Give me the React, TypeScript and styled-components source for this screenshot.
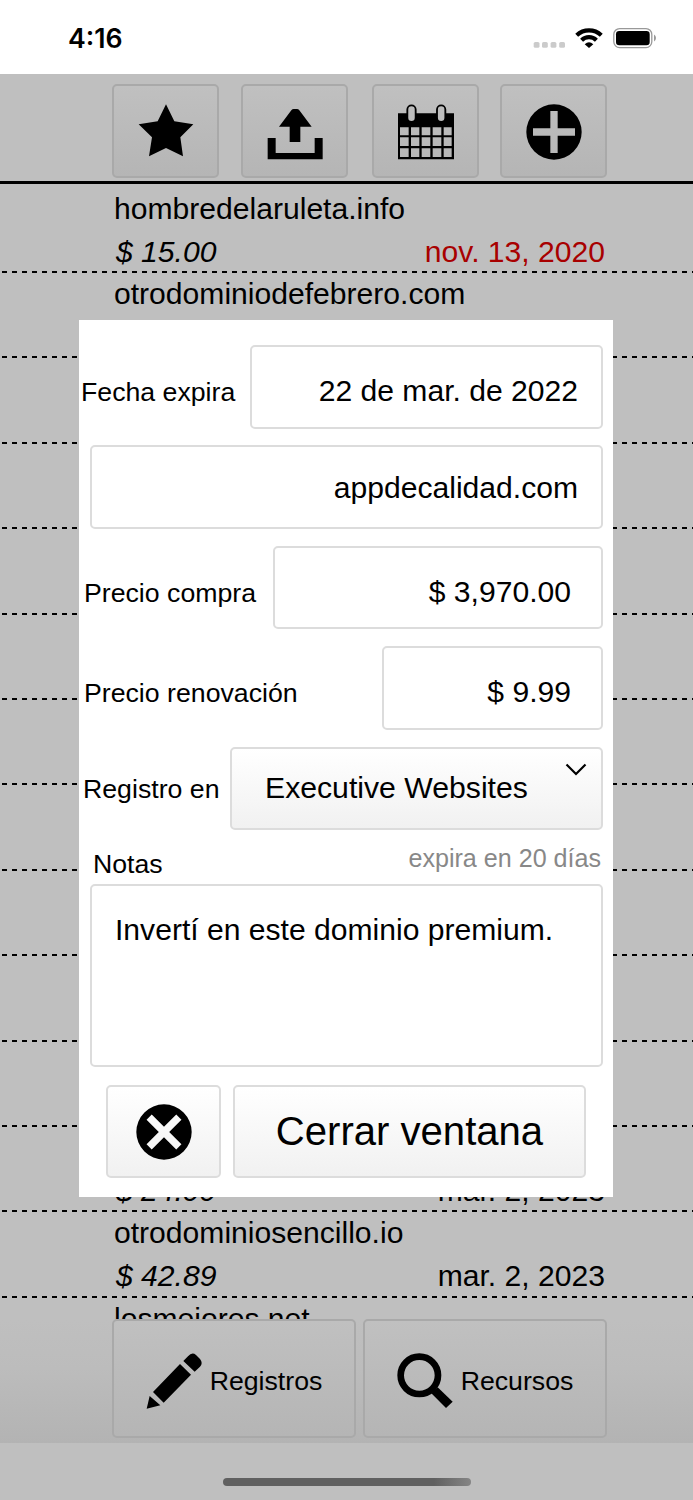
import React from "react";
import styled, { createGlobalStyle } from "styled-components";

const GlobalStyle = createGlobalStyle`
  * { box-sizing: border-box; }
  body { margin: 0; background: #bfbfbf; font-family: "Liberation Sans", Arial, sans-serif; color: #000; }
  button { font: inherit; color: inherit; cursor: pointer; }
`;

const Screen = styled.div`
  position: relative;
  display: flex;
  flex-direction: column;
  width: 693px;
  height: 1500px;
  overflow: hidden;
  background: #bfbfbf;
`;

const StatusBar = styled.header`
  display: flex;
  flex: none;
  justify-content: space-between;
  height: 74px;
  padding: 22px 36px 0 68px;
  background: #fff;
`;

const Clock = styled.time`
  font: 600 26.7px/33px Inter, sans-serif;
`;

const StatusIcons = styled.svg`
  width: 124px;
  height: 30px;
`;

const Toolbar = styled.nav`
  display: grid;
  flex: none;
  grid-template-columns: 128.5px 131px 128.5px 107px;
  height: 110px;
  padding: 10px 0 0 112px;
  border-bottom: 3px solid #000;
`;

const DimButton = styled.button<{ $w: number; $h: number; $pad?: string }>`
  display: flex;
  align-items: center;
  justify-content: center;
  width: ${(p) => p.$w}px;
  height: ${(p) => p.$h}px;
  padding: ${(p) => p.$pad ?? "2px 0 0 1px"};
  border: 2px solid #a9a9a9;
  border-radius: 5px;
  background: linear-gradient(#c0c0c0, #b5b5b5);
`;

const Icon = styled.svg`
  display: block;
  flex: none;
  width: 56px;
  height: 56px;
`;

const List = styled.main`
  flex: none;
  height: 1135px;
  padding-top: 3.6px;
  overflow: hidden;
`;

const Row = styled.article`
  height: 85.4px;
  padding: 0 88px 0 114px;
  font-size: 30.1px;
  line-height: 43px;
  background: repeating-linear-gradient(90deg, #000 0 5px, transparent 5px 10px) 2px 100% / 100% 2px no-repeat;
`;

const Name = styled.div`
  height: 42.2px;
  line-height: 41px;
`;

const Details = styled.div`
  display: flex;
  justify-content: space-between;
`;

const Price = styled.i`
  margin-left: 2px;
`;

const When = styled.span<{ $expired?: boolean }>`
  color: ${(p) => (p.$expired ? "#a80000" : "inherit")};
`;

const Footer = styled.footer`
  display: flex;
  flex: none;
  gap: 7px;
  height: 124px;
  padding-left: 112px;
  background: linear-gradient(#bfbfbf, #bcbcbc 40%, #b3b3b3);
  font-size: 26.7px;
`;

const FooterLabel = styled.span`
  margin: 1px 0 0 8px;
`;

const HomeArea = styled.div`
  display: flex;
  flex: 1;
  justify-content: center;
  padding-top: 35px;
`;

const HomeBar = styled.div`
  width: 248px;
  height: 8px;
  border-radius: 4px;
  background: linear-gradient(90deg, #606060 85%, #858585);
`;

const Dialog = styled.section`
  position: absolute;
  left: 79px;
  top: 320px;
  display: flex;
  flex-direction: column;
  width: 534px;
  height: 877px;
  padding: 25px 10px 0 0;
  background: #fff;
`;

const FieldRow = styled.div`
  display: flex;
  flex: none;
  justify-content: flex-end;
  height: 100.4px;
`;

const Label = styled.label<{ $x: number; $top?: number }>`
  flex: 1;
  padding: ${(p) => p.$top ?? 32}px 0 0 ${(p) => p.$x}px;
  font-size: 26.7px;
  line-height: 30px;
  white-space: nowrap;
`;

const Field = styled.div<{ $w: number; $right?: number; $top?: number }>`
  flex: none;
  width: ${(p) => p.$w}px;
  height: 83.5px;
  padding: ${(p) => p.$top ?? 26}px ${(p) => p.$right ?? 23}px 0 0;
  border: 2px solid #dcdcdc;
  border-radius: 5px;
  font-size: 30.1px;
  line-height: 36px;
  text-align: right;
`;

const Select = styled.button`
  position: relative;
  width: 373px;
  height: 83px;
  padding: 0 0 1px 33px;
  border: 2px solid #dcdcdc;
  border-radius: 5px;
  background: linear-gradient(#fff, #f1f1f1);
  font-size: 30.2px;
  text-align: left;
`;

const Chevron = styled.svg`
  position: absolute;
  right: 14px;
  top: 14px;
  width: 22px;
  height: 13px;
`;

const NotesHead = styled.div`
  display: flex;
  flex: none;
  justify-content: space-between;
  height: 37px;
  padding: 0 2px 0 14px;
  font-size: 26.7px;
`;

const NotesTitle = styled.span`
  line-height: 34px;
`;

const Remaining = styled.span`
  color: #888;
  font-size: 25.1px;
  line-height: 22px;
`;

const Notes = styled.div`
  flex: none;
  height: 183px;
  margin-left: 11px;
  padding: 26px 23px;
  border: 2px solid #dcdcdc;
  border-radius: 5px;
  font-size: 30.1px;
  line-height: 36px;
  white-space: nowrap;
`;

const Actions = styled.div`
  display: flex;
  gap: 12px;
  padding: 18px 0 0 27px;
`;

const Action = styled.button<{ $w: number }>`
  display: flex;
  align-items: center;
  justify-content: center;
  width: ${(p) => p.$w}px;
  height: 93px;
  padding: 1px 0 0;
  border: 2px solid #dcdcdc;
  border-radius: 5px;
  background: linear-gradient(#fff, #f1f1f1);
  font-size: 40.1px;
`;

const cellsX = [[6, 26], [39, 25], [71, 26], [104, 26], [137, 24]];
const cellsY = [[70, 24], [100, 26], [133, 26]];
const cells = cellsY
  .flatMap(([y, h]) => cellsX.map(([x, w]) => `M${x} ${y}h${w}v${h}h${-w}z`))
  .join("");

const disc = "M84 1a83 83 0 1 0 0 166a83 83 0 1 0 0-166z";
const cross = "M73 21V73H21V95H73V147H95V95H147V73H95V21z";

const StarIcon = () => (
  <Icon viewBox="0 0 168 168">
    <path d="M84 1L109 52L166 61L127 100L135 157L84 132L33 157L42 100L2 61L59 52Z" />
  </Icon>
);
const UploadIcon = () => (
  <Icon viewBox="0 0 168 168">
    <path d="M2 102H26V147H143V102H167V166H2Z" />
    <path d="M68 114V68H36L73 19Q76 15 80 15H90Q94 15 97 19L134 68H100V114Z" />
  </Icon>
);
const CalendarIcon = () => (
  <Icon viewBox="0 0 168 168">
    <path fillRule="evenodd" d={`M0 28H168V166H0z${cells}`} />
    <g fill="#bdbdbd" stroke="#000" strokeWidth="5.5">
      <rect x="28" y="4" width="25" height="50" rx="12.5" />
      <rect x="117" y="4" width="25" height="50" rx="12.5" />
    </g>
  </Icon>
);
const PlusIcon = () => (
  <Icon viewBox="0 0 168 168">
    <path fillRule="evenodd" d={disc + cross} />
  </Icon>
);
const CloseIcon = () => (
  <Icon viewBox="0 0 168 168">
    <path fillRule="evenodd" transform="rotate(45 84 84)" d={disc + cross} />
  </Icon>
);
const PencilIcon = () => (
  <Icon viewBox="0 0 168 168">
    <path d="M2 167L11 129L43 157ZM21 117L102 33L135 65L53 149ZM112 24L126 10Q138-4 150 6L162 18Q172 30 162 41L146 56Z" />
  </Icon>
);
const SearchIcon = () => (
  <Icon viewBox="0 0 168 168">
    <circle cx="67" cy="67" r="56" fill="none" stroke="#000" strokeWidth="20" />
    <path d="M103 121L122 103L167 146L147 165Z" />
  </Icon>
);

type Domain = { name?: string; price?: string; date?: string; expired?: boolean };

const domains: Domain[] = [
  { name: "hombredelaruleta.info", price: "$ 15.00", date: "nov. 13, 2020", expired: true },
  { name: "otrodominiodefebrero.com" },
  {}, {}, {}, {}, {}, {}, {}, {}, {},
  { price: "$ 24.99", date: "mar. 2, 2023" },
  { name: "otrodominiosencillo.io", price: "$ 42.89", date: "mar. 2, 2023" },
  { name: "losmejores.net" },
];

export default function App() {
  return (
    <Screen>
      <GlobalStyle />
      <StatusBar>
        <Clock>4:16</Clock>
        <StatusIcons viewBox="0 0 124 30">
          <g fill="#cbcbcb">
            {[0.7, 9, 17.6, 26.2].map((x) => (
              <rect key={x} x={x} y="20" width="5.8" height="5.8" rx="1.6" />
            ))}
          </g>
          <g fill="none" stroke="#000" strokeWidth="4.2">
            <path d="M43.7 13.2A18 18 0 0 1 68.3 13.2" />
            <path d="M48.6 18.2A10.6 10.6 0 0 1 63.4 18.2" />
          </g>
          <path d="M51.7 22.2Q56 18.4 60.3 22.2L56 26Z" />
          <rect x="80.8" y="6.6" width="38" height="19" rx="5.8" fill="none" stroke="#999" strokeWidth="1.3" />
          <rect x="83" y="9" width="33.7" height="14.2" rx="3.2" />
          <path d="M121 12.6Q123 14 123 16Q123 18 121 19.5Z" fill="#999" />
        </StatusIcons>
      </StatusBar>

      <Toolbar>
        <DimButton $w={107} $h={94} aria-label="Favoritos"><StarIcon /></DimButton>
        <DimButton $w={107} $h={94} aria-label="Exportar"><UploadIcon /></DimButton>
        <DimButton $w={107} $h={94} aria-label="Calendario"><CalendarIcon /></DimButton>
        <DimButton $w={107} $h={94} aria-label="Agregar"><PlusIcon /></DimButton>
      </Toolbar>

      <List>
        {domains.map((d, i) => (
          <Row key={i}>
            <Name>{d.name}</Name>
            <Details>
              <Price>{d.price}</Price>
              <When $expired={d.expired}>{d.date}</When>
            </Details>
          </Row>
        ))}
      </List>

      <Footer>
        <DimButton $w={244} $h={119} $pad="5px 0 0"><PencilIcon /><FooterLabel>Registros</FooterLabel></DimButton>
        <DimButton $w={244} $h={119} $pad="5px 0 0"><SearchIcon /><FooterLabel>Recursos</FooterLabel></DimButton>
      </Footer>
      <HomeArea><HomeBar /></HomeArea>

      <Dialog role="dialog">
        <FieldRow>
          <Label $x={2}>Fecha expira</Label>
          <Field $w={353}>22 de mar. de 2022</Field>
        </FieldRow>
        <FieldRow>
          <Field $w={513} $top={23}>appdecalidad.com</Field>
        </FieldRow>
        <FieldRow>
          <Label $x={5}>Precio compra</Label>
          <Field $w={330} $right={30}>$ 3,970.00</Field>
        </FieldRow>
        <FieldRow>
          <Label $x={5}>Precio renovación</Label>
          <Field $w={221} $right={30}>$ 9.99</Field>
        </FieldRow>
        <FieldRow>
          <Label $x={4} $top={27}>Registro en</Label>
          <Select>
            Executive Websites
            <Chevron viewBox="0 0 22 13">
              <path d="M1.5 1.5L11 11L20.5 1.5" fill="none" stroke="#000" strokeWidth="2.2" />
            </Chevron>
          </Select>
        </FieldRow>
        <NotesHead>
          <NotesTitle>Notas</NotesTitle>
          <Remaining>expira en 20 días</Remaining>
        </NotesHead>
        <Notes>Invertí en este dominio premium.</Notes>
        <Actions>
          <Action $w={115} aria-label="Eliminar"><CloseIcon /></Action>
          <Action $w={353}>Cerrar ventana</Action>
        </Actions>
      </Dialog>
    </Screen>
  );
}
